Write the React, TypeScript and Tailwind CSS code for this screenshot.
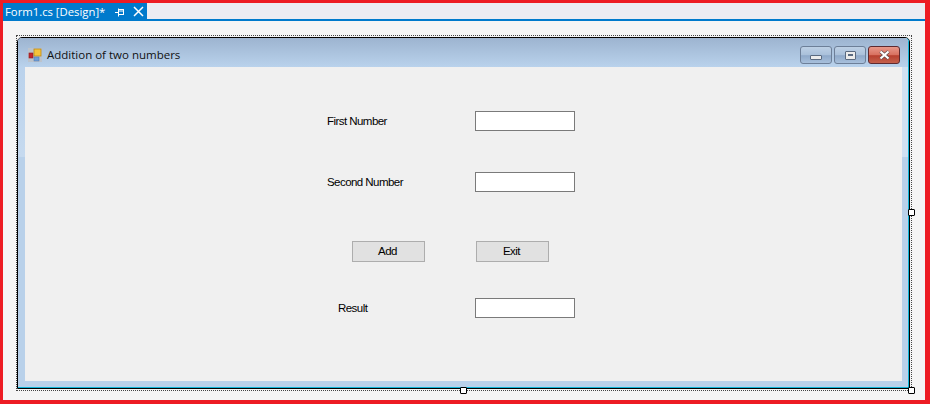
import { ReactNode } from "react";

const formFont = "font-['Liberation_Sans',sans-serif] text-[11.5px] text-black tracking-[-0.55px]";

function Handle({ className }: { className: string }) {
  return <div className={`absolute w-[7px] h-[7px] bg-white border border-black rounded-[1px] ${className}`} />;
}

function TextBox({ className }: { className: string }) {
  return <div className={`absolute w-[100px] h-[20px] bg-white border border-[#7a7a7a] ${className}`} />;
}

function FormButton({ className, children }: { className: string; children: ReactNode }) {
  return (
    <div className={`absolute w-[73px] h-[21px] flex items-center justify-center pr-[2px] bg-[#e1e1e1] border border-[#adadad] ${formFont} ${className}`}>
      {children}
    </div>
  );
}

function CaptionButton({ className, children }: { className: string; children: ReactNode }) {
  return (
    <div className={`w-[32px] h-[18px] flex items-center justify-center rounded-[3px] border ${className}`}>
      {children}
    </div>
  );
}

const blueButton =
  "border-[#6d7f98] bg-[linear-gradient(#bdd0e5,#a9c0da_50%,#8fa9c9_54%,#a8c0dc)]";

export default function App() {
  return (
    <div className="w-[930px] h-[404px] bg-[#f5f5f5] border-[#ed1c24] border-l-[3px] border-t-[3px] border-r-[5px] border-b-[4px] flex flex-col font-['Open_Sans',sans-serif]">
      {/* document tab strip */}
      <div className="h-[18px] shrink-0 flex bg-[#ececf2] border-b-2 border-[#007acc]">
        <div className="w-[144px] h-[17px] flex items-center pl-[2px] bg-[#007acc] text-white text-[11.3px] leading-none">
          <span className="w-[110px] whitespace-nowrap">Form1.cs [Design]*</span>
          <svg width="10" height="10" viewBox="0 0 10 10" fill="none" stroke="#ffffff">
            <path d="M0 5.5h3M3.5 1.5v8M3.5 2.5h5M3.5 7.5h5M8.5 2v6M3.5 4h5" />
          </svg>
          <svg width="11" height="11" viewBox="0 0 11 11" className="ml-[8px]" fill="none" stroke="#ffffff" strokeWidth="1.5">
            <path d="M1 1l9 9M10 1l-9 9" />
          </svg>
        </div>
      </div>

      {/* designer surface */}
      <div className="flex-1 pl-[13px] pt-[14px]">
        <div className="relative w-[896px] h-[356px] border border-dotted border-[#444444] pt-[1px] pr-[1px] pb-[1px]">
          <div className="h-full rounded-t-[5px] border border-black">
            <div className="h-full flex flex-col rounded-t-[4px] bg-[#b9d1ea] border-r border-b border-[#10b5d8]">
              {/* title bar */}
              <div className="h-[29px] shrink-0 flex items-center pt-[5px] pl-[10px] pr-[8px] rounded-t-[4px] bg-gradient-to-b from-[#9db4d0] to-[#b9d2ec]">
                <svg width="14" height="14" viewBox="0 0 14 14" className="shrink-0">
                  <rect x="0" y="0" width="14" height="14" fill="#bcc3cc" />
                  <rect x="1" y="5" width="4" height="5" fill="#c4262e" stroke="#8a1a1f" strokeWidth="0.6" />
                  <rect x="6" y="1" width="7" height="7" fill="#f5c33b" stroke="#b98a1c" strokeWidth="0.8" />
                  <rect x="6" y="9" width="5" height="4" fill="#6f9fd8" stroke="#4d76ac" strokeWidth="0.5" />
                </svg>
                <span className="ml-[5px] text-[11.5px] text-[#111111] leading-none">Addition of two numbers</span>
                <div className="ml-auto flex gap-[2px]">
                  <CaptionButton className={blueButton}>
                    <div className="w-[12px] h-[5px] mt-[4px] bg-[#ececec] border border-[#5a6a80] rounded-[1px]" />
                  </CaptionButton>
                  <CaptionButton className={blueButton}>
                    <div className="w-[11px] h-[9px] flex items-center justify-center bg-[#ececec] border border-[#5a6a80] rounded-[1px]">
                      <div className="w-[5px] h-[2px] bg-[#5a6a80]" />
                    </div>
                  </CaptionButton>
                  <CaptionButton className="border-[#5e2a30] bg-[linear-gradient(#e8988a,#d8705f_50%,#b8402f_54%,#c4604c)]">
                    <svg width="13" height="10" viewBox="0 0 13 10" fill="none">
                      <path d="M2.5 1.5l8 7M10.5 1.5l-8 7" stroke="#5f4a4a" strokeWidth="3.6" />
                      <path d="M2.5 1.5l8 7M10.5 1.5l-8 7" stroke="#ffffff" strokeWidth="2.2" />
                    </svg>
                  </CaptionButton>
                </div>
              </div>

              {/* client area with form controls */}
              <div className="flex-1 flex pl-[7px] pr-[6px] pb-[6px]">
                <div className="relative flex-1 bg-[#f0f0f0]">
                  <span className={`absolute left-[302px] top-[46px] ${formFont}`}>First Number</span>
                  <TextBox className="left-[450px] top-[44px]" />
                  <span className={`absolute left-[302px] top-[107px] ${formFont}`}>Second Number</span>
                  <TextBox className="left-[450px] top-[105px]" />
                  <FormButton className="left-[327px] top-[174px]">Add</FormButton>
                  <FormButton className="left-[451px] top-[174px]">Exit</FormButton>
                  <span className={`absolute left-[313px] top-[233px] ${formFont}`}>Result</span>
                  <TextBox className="left-[450px] top-[231px]" />
                </div>
              </div>
            </div>
          </div>
          {/* lighter top of the side frames */}
          <div className="absolute left-[1px] top-[31px] w-[7px] h-[90px] bg-gradient-to-b from-[#bad2ec] to-[#c6daef]" />
          <div className="absolute right-[3px] top-[31px] w-[6px] h-[90px] bg-[#cfe0f2]" />
          <Handle className="right-[-4px] top-[173px]" />
          <Handle className="left-[443px] bottom-[-4px]" />
          <Handle className="right-[-4px] bottom-[-4px]" />
        </div>
      </div>
    </div>
  );
}
